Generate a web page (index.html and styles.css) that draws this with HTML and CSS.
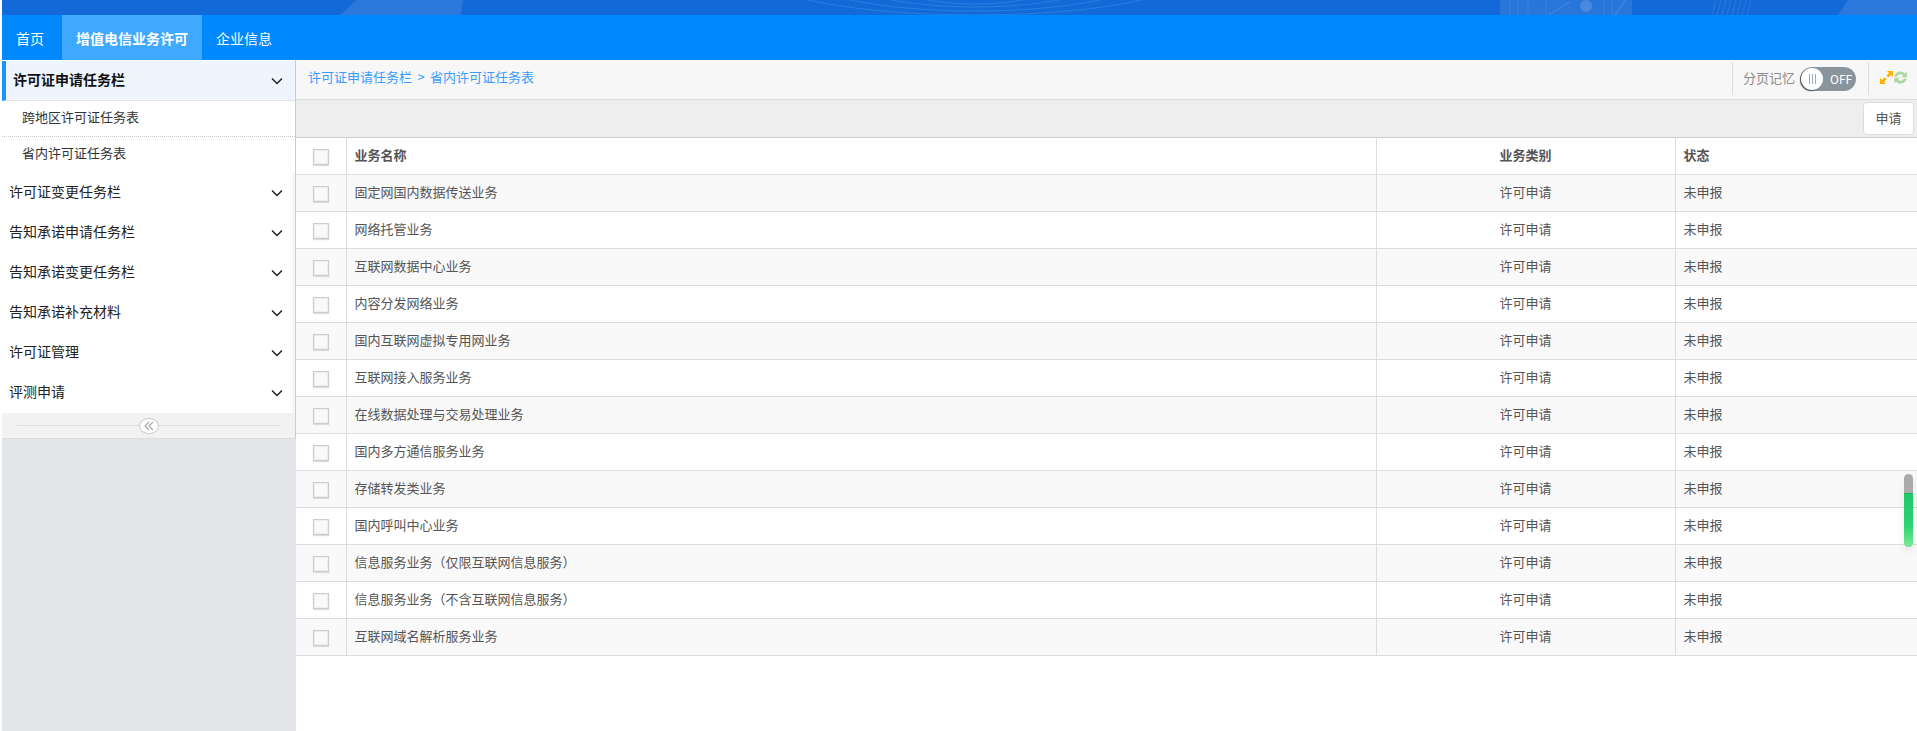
FILE: index.html
```html
<!doctype html>
<html lang="zh-CN">
<head>
  <meta charset="utf-8">
  <title>增值电信业务许可</title>
  <link rel="stylesheet" href="styles.css">
</head>
<body>
  <div class="banner">
    <svg class="bannerArt" width="1915" height="15" viewBox="2 0 1915 15" fill="none">
      <path d="M340 15L357 0H463L461 15Z" fill="#fff" fill-opacity=".1"/>
      <path d="M1838 15L1848 0H1917V15Z" fill="#fff" fill-opacity=".1"/>
      <g stroke="#3fa6ea" stroke-opacity=".4">
        <ellipse cx="975" cy="-26" rx="215" ry="41"/>
        <ellipse cx="975" cy="-26" rx="175" ry="37"/>
        <ellipse cx="975" cy="-26" rx="135" ry="33"/>
        <ellipse cx="975" cy="-26" rx="95" ry="30"/>
      </g>
      <rect x="1500" width="132" height="15" fill="#fff" fill-opacity=".09"/>
      <circle cx="1586" cy="6" r="6" fill="#fff" fill-opacity=".15"/>
      <path d="M1510 0V15M1518 0V15M1528 0V15M1546 0V15M1604 0V15M1612 0V15" stroke="#fff" stroke-opacity=".08"/>
      <path d="M1548 15L1570 2M1615 15L1625 0" stroke="#fff" stroke-opacity=".14"/>
      <path d="M1712 15L1716 0M1717 15L1721 0M1722 15L1726 0M1727 15L1731 0M1732 15L1736 0M1737 15L1741 0M1742 15L1746 0M1747 15L1751 0" stroke="#fff" stroke-opacity=".1"/>
    </svg>
  </div>
  <nav class="topNav">
    <a class="navItem first">首页</a>
    <a class="navItem active">增值电信业务许可</a>
    <a class="navItem">企业信息</a>
  </nav>
  <div class="content">
    <aside class="sidebar">
      <div class="menu">
        <div class="menuHead open"><span>许可证申请任务栏</span>
          <svg class="chevron" width="12" height="8" viewBox="0 0 12 8"><path d="M1 1.500L6 6.500L11 1.500"/></svg>
        </div>
        <div class="subItem dotted">跨地区许可证任务表</div>
        <div class="subItem">省内许可证任务表</div>
        <div class="menuHead"><span>许可证变更任务栏</span>
          <svg class="chevron" width="12" height="8" viewBox="0 0 12 8"><path d="M1 1.500L6 6.500L11 1.500"/></svg>
        </div>
        <div class="menuHead"><span>告知承诺申请任务栏</span>
          <svg class="chevron" width="12" height="8" viewBox="0 0 12 8"><path d="M1 1.500L6 6.500L11 1.500"/></svg>
        </div>
        <div class="menuHead"><span>告知承诺变更任务栏</span>
          <svg class="chevron" width="12" height="8" viewBox="0 0 12 8"><path d="M1 1.500L6 6.500L11 1.500"/></svg>
        </div>
        <div class="menuHead"><span>告知承诺补充材料</span>
          <svg class="chevron" width="12" height="8" viewBox="0 0 12 8"><path d="M1 1.500L6 6.500L11 1.500"/></svg>
        </div>
        <div class="menuHead"><span>许可证管理</span>
          <svg class="chevron" width="12" height="8" viewBox="0 0 12 8"><path d="M1 1.500L6 6.500L11 1.500"/></svg>
        </div>
        <div class="menuHead"><span>评测申请</span>
          <svg class="chevron" width="12" height="8" viewBox="0 0 12 8"><path d="M1 1.500L6 6.500L11 1.500"/></svg>
        </div>
      </div>
      <div class="collapseBar">
        <span class="collapseLine"></span>
        <span class="collapseBtn">
          <svg width="10" height="10" viewBox="0 0 10 10"><path d="M5 1L1 5L5 9M9 1L5 5L9 9"/></svg>
        </span>
        <span class="collapseLine"></span>
      </div>
    </aside>
    <main class="main">
      <div class="crumbBar">
        <div class="crumbs">许可证申请任务栏 &gt; 省内许可证任务表</div>
        <div class="pageMemory">
          <span class="memoryLabel">分页记忆</span>
          <span class="toggle"><span class="knob"><i></i><i></i><i></i></span>OFF</span>
        </div>
        <div class="tools">
          <svg width="13" height="13" viewBox="0 0 14 14" fill="#ffb100">
            <path d="M7.500 0H14V6.500L11.800 4.300L9 7.100L6.900 5L9.700 2.200Z"/>
            <path d="M6.500 14H0V7.500L2.200 9.700L5 6.900L7.100 9L4.300 11.800Z"/>
          </svg>
          <svg width="13" height="13" viewBox="0 0 14 14" fill="#a9d89f">
            <path d="M0.500 6C1 2.800 3.700 0.500 7 0.500C9 0.500 10.700 1.400 11.800 2.700L13.800 0.800V6.800H7.800L9.800 4.900C9.100 4.100 8.100 3.600 7 3.600C5.200 3.600 3.800 4.500 3.400 6Z"/>
            <path d="M13.500 8C13 11.200 10.300 13.500 7 13.500C5 13.500 3.300 12.600 2.200 11.300L0.200 13.200V7.200H6.200L4.200 9.100C4.900 9.900 5.900 10.400 7 10.400C8.800 10.400 10.200 9.500 10.600 8Z"/>
          </svg>
        </div>
      </div>
      <div class="toolBar">
        <button type="button" class="applyBtn">申请</button>
      </div>
      <table class="taskTable">
        <colgroup>
          <col class="colCheck"><col><col class="colType"><col class="colStatus">
        </colgroup>
        <thead>
          <tr><th><span class="check"></span></th><th>业务名称</th><th class="center">业务类别</th><th>状态</th></tr>
        </thead>
        <tbody>
          <tr><td><span class="check"></span></td><td>固定网国内数据传送业务</td><td class="center">许可申请</td><td>未申报</td></tr>
          <tr><td><span class="check"></span></td><td>网络托管业务</td><td class="center">许可申请</td><td>未申报</td></tr>
          <tr><td><span class="check"></span></td><td>互联网数据中心业务</td><td class="center">许可申请</td><td>未申报</td></tr>
          <tr><td><span class="check"></span></td><td>内容分发网络业务</td><td class="center">许可申请</td><td>未申报</td></tr>
          <tr><td><span class="check"></span></td><td>国内互联网虚拟专用网业务</td><td class="center">许可申请</td><td>未申报</td></tr>
          <tr><td><span class="check"></span></td><td>互联网接入服务业务</td><td class="center">许可申请</td><td>未申报</td></tr>
          <tr><td><span class="check"></span></td><td>在线数据处理与交易处理业务</td><td class="center">许可申请</td><td>未申报</td></tr>
          <tr><td><span class="check"></span></td><td>国内多方通信服务业务</td><td class="center">许可申请</td><td>未申报</td></tr>
          <tr><td><span class="check"></span></td><td>存储转发类业务</td><td class="center">许可申请</td><td>未申报</td></tr>
          <tr><td><span class="check"></span></td><td>国内呼叫中心业务</td><td class="center">许可申请</td><td>未申报</td></tr>
          <tr><td><span class="check"></span></td><td>信息服务业务（仅限互联网信息服务）</td><td class="center">许可申请</td><td>未申报</td></tr>
          <tr><td><span class="check"></span></td><td>信息服务业务（不含互联网信息服务）</td><td class="center">许可申请</td><td>未申报</td></tr>
          <tr><td><span class="check"></span></td><td>互联网域名解析服务业务</td><td class="center">许可申请</td><td>未申报</td></tr>
        </tbody>
      </table>
      <div class="floatBar"><span class="floatFill"></span></div>
    </main>
  </div>
</body>
</html>
```

FILE: styles.css
```css
* {
  box-sizing: border-box;
}
html, body {
  margin: 0;
  height: 100%;
}
body {
  display: flex;
  flex-direction: column;
  padding-left: 2px;
  height: 100vh;
  overflow: hidden;
  background: #fff;
  font-family: "Noto Sans CJK SC", "Noto Sans", sans-serif;
  font-size: 13px;
  color: #555;
}
.banner {
  height: 15px;
  flex: none;
  background: #1469d8;
}
.bannerArt {
  display: block;
}
.topNav {
  display: flex;
  height: 45px;
  flex: none;
  background: #0088ff;
}
.navItem {
  padding: 0 14px;
  line-height: 47px;
  font-size: 14px;
  color: #fff;
}
.navItem.first {
  padding-right: 18px;
}
.navItem.active {
  background: #3fa9ff;
  font-weight: bold;
}
.content {
  display: flex;
  flex: 1;
  min-height: 0;
}
.sidebar {
  width: 294px;
  flex: none;
  background: #e4e5e8;
}
.menu {
  padding-top: 1px;
  background: #fff;
  border-right: 1px solid #ccc;
}
.menuHead {
  display: flex;
  justify-content: space-between;
  align-items: center;
  height: 40px;
  padding: 0 9px 0 7px;
  border-right: 3px solid #f7f7f7;
  font-size: 14px;
  color: #222;
}
.menuHead span {
  margin-bottom: 4px;
}
.menuHead.open {
  padding-left: 7px;
  background: #eef5ff;
  border-left: 4px solid #1e90ff;
  border-bottom: 1px solid #e2e2e2;
  border-right: 0;
  padding-right: 12px;
  font-weight: bold;
  color: #111;
}
.chevron {
  fill: none;
  stroke: #222;
  stroke-width: 1.5;
}
.subItem {
  height: 36px;
  padding-left: 20px;
  line-height: 32px;
  color: #333;
}
.subItem.dotted {
  border-bottom: 1px dotted #ccc;
}
.collapseBar {
  display: flex;
  align-items: center;
  height: 26px;
  padding: 0 15px;
  background: #f2f2f2;
  border-right: 1px solid #ccc;
  border-bottom: 1px solid #ddd;
}
.collapseLine {
  flex: 1;
  height: 1px;
  background: #ddd;
}
.collapseBtn {
  display: flex;
  align-items: center;
  justify-content: center;
  width: 20px;
  height: 16px;
  border: 1px solid #ccc;
  border-radius: 50%;
  background: #fff;
}
.collapseBtn svg {
  fill: none;
  stroke: #aaa;
  stroke-width: 1.2;
}
.main {
  position: relative;
  flex: 1;
  min-width: 0;
}
.crumbBar {
  display: flex;
  align-items: center;
  height: 40px;
  background: #f7f7f7;
  border-bottom: 1px solid #ddd;
}
.crumbs {
  flex: 1;
  padding: 0 0 7px 12px;
  word-spacing: 2.5px;
  color: #3a9bff;
}
.pageMemory {
  display: flex;
  align-items: center;
  height: 33px;
  margin-bottom: 2px;
  padding: 0 12px 0 10px;
  border-left: 1px solid #ddd;
  border-right: 1px solid #ddd;
}
.memoryLabel {
  margin-right: 5px;
  margin-bottom: 2px;
  color: #8c8c8c;
}
.toggle {
  display: flex;
  align-items: center;
  width: 56px;
  height: 24px;
  padding: 0 0 1px 1px;
  border-radius: 12px;
  background: #8a949c;
  font-size: 12px;
  color: #fff;
}
.knob {
  display: flex;
  align-items: center;
  justify-content: center;
  gap: 2px;
  width: 22px;
  height: 22px;
  margin-top: 1px;
  margin-right: 7px;
  border-radius: 50%;
  background: #fff;
  box-shadow: -1px 1px 1px #555;
}
.knob i {
  width: 1px;
  height: 10px;
  background: #a0a8c0;
}
.tools {
  display: flex;
  align-items: center;
  gap: 1px;
  width: 48px;
  padding-left: 11px;
  margin-bottom: 4px;
}
.toolBar {
  display: flex;
  justify-content: flex-end;
  height: 38px;
  padding: 2px 3px 0 0;
  background: #eee;
  border-bottom: 1px solid #ccc;
}
.applyBtn {
  width: 51px;
  height: 33px;
  padding: 0 0 2px;
  border: 1px solid #ddd;
  border-radius: 4px;
  background: #fff;
  font-family: inherit;
  font-size: 13px;
  color: #555;
}
.taskTable {
  width: 100%;
  table-layout: fixed;
  border-collapse: collapse;
}
.colCheck {
  width: 50px;
}
.colType {
  width: 299px;
}
.colStatus {
  width: 242px;
}
.taskTable th, .taskTable td {
  height: 37px;
  padding: 0 8px 2px;
  border-bottom: 1px solid #ddd;
  border-left: 1px solid #ddd;
  font-weight: normal;
  text-align: left;
}
.taskTable th {
  font-weight: bold;
  height: 36px;
}
.taskTable th:first-child, .taskTable td:first-child {
  border-left: 0;
  padding: 2px 0 0 17px;
}
.taskTable tbody tr:nth-child(odd) {
  background: #f9f9f9;
}
.taskTable .center {
  text-align: center;
}
.check {
  display: block;
  width: 16px;
  height: 16px;
  background: #f9f9f9;
  border: 1px solid #ccc;
  box-shadow: 0 1px 1px #ddd, inset 0 0 0 1px #eee;
}
.floatBar {
  position: absolute;
  top: 414px;
  right: 4px;
  width: 9px;
  height: 73px;
  padding-top: 19px;
  border-radius: 5px;
  background: #aaa;
  box-shadow: 0 5px 8px rgba(0, 0, 0, .08);
  overflow: hidden;
}
.floatFill {
  display: block;
  height: 54px;
  border-top: 1px solid #17b558;
  background: linear-gradient(#1fc868, #2ed372 60%, #7cea98);
}
```
